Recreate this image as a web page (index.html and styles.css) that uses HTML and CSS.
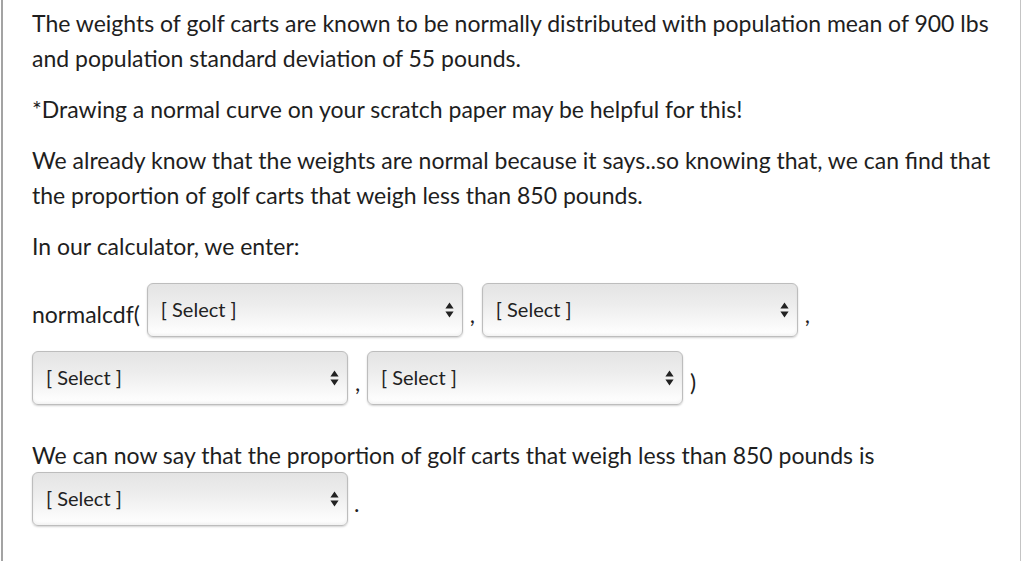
FILE: index.html
```html
<!DOCTYPE html>
<html lang="en">
<head>
<meta charset="utf-8">
<title>Golf carts</title>
<link rel="stylesheet" href="styles.css">
</head>
<body>
<div class="panel">
  <p class="para">The weights of golf carts are known to be normally distributed with population mean of 900 lbs and population standard deviation of 55 pounds.</p>
  <p class="para">*Drawing a normal curve on your scratch paper may be helpful for this!</p>
  <p class="para">We already know that the weights are normal because it says..so knowing that, we can find that the proportion of golf carts that weigh less than 850 pounds.</p>
  <p class="para">In our calculator, we enter:</p>
  <p class="para calc">normalcdf( <span class="select"><span class="sel-label">[ Select ]</span><svg class="arrows" width="9" height="16" viewBox="0 0 9 16"><path d="M4.5 0.5 L8.6 6.6 L0.4 6.6 Z M0.4 9.4 L8.6 9.4 L4.5 15.5 Z" fill="#222"/></svg></span> , <span class="select"><span class="sel-label">[ Select ]</span><svg class="arrows" width="9" height="16" viewBox="0 0 9 16"><path d="M4.5 0.5 L8.6 6.6 L0.4 6.6 Z M0.4 9.4 L8.6 9.4 L4.5 15.5 Z" fill="#222"/></svg></span> , <span class="select"><span class="sel-label">[ Select ]</span><svg class="arrows" width="9" height="16" viewBox="0 0 9 16"><path d="M4.5 0.5 L8.6 6.6 L0.4 6.6 Z M0.4 9.4 L8.6 9.4 L4.5 15.5 Z" fill="#222"/></svg></span> , <span class="select"><span class="sel-label">[ Select ]</span><svg class="arrows" width="9" height="16" viewBox="0 0 9 16"><path d="M4.5 0.5 L8.6 6.6 L0.4 6.6 Z M0.4 9.4 L8.6 9.4 L4.5 15.5 Z" fill="#222"/></svg></span> )</p>
  <p class="para conclude">We can now say that the proportion of golf carts that weigh less than 850 pounds is</p>
  <p class="para answer"><span class="select"><span class="sel-label">[ Select ]</span><svg class="arrows" width="9" height="16" viewBox="0 0 9 16"><path d="M4.5 0.5 L8.6 6.6 L0.4 6.6 Z M0.4 9.4 L8.6 9.4 L4.5 15.5 Z" fill="#222"/></svg></span> .</p>
</div>
</body>
</html>
```

FILE: styles.css
```css
html, body {
  margin: 0;
  padding: 0;
  background: #ffffff;
}

body {
  font-family: Lato, "Open Sans", sans-serif;
  font-size: 23px;
  color: #1e1e1e;
}

.panel {
  margin-left: 1px;
  width: 988px;
  min-height: 561px;
  border-left: 2px solid #a3a3a3;
  border-right: 1px solid #c4c4c4;
  padding: 6px 0 0 29px;
  box-sizing: content-box;
}

.para {
  margin: 0 0 16px 0;
  line-height: 35px;
}

.calc {
  margin-top: 15px;
  margin-bottom: 0;
  line-height: 68px;
  word-spacing: 1px;
}

.select {
  display: inline-block;
  position: relative;
  box-sizing: border-box;
  width: 316px;
  height: 54px;
  line-height: 50px;
  padding: 0 14px 0 13px;
  border: 1px solid #bdbdbd;
  border-radius: 6px;
  background: linear-gradient(to bottom, #e4e4e4 0%, #ededed 40%, #fbfbfb 85%, #ffffff 100%);
  box-shadow: 0 1px 2px rgba(0, 0, 0, 0.18), inset 0 -2px 3px rgba(0, 0, 0, 0.05);
  vertical-align: 6px;
  color: #222;
  font-size: 20px;
  word-spacing: 0;
  text-align: left;
}

.sel-label {
  display: inline-block;
}

.arrows {
  position: absolute;
  right: 8px;
  top: 18px;
}

.conclude {
  margin-top: 22px;
  margin-bottom: 0;
}

.answer {
  margin-top: -4px;
  line-height: 68px;
}
```
